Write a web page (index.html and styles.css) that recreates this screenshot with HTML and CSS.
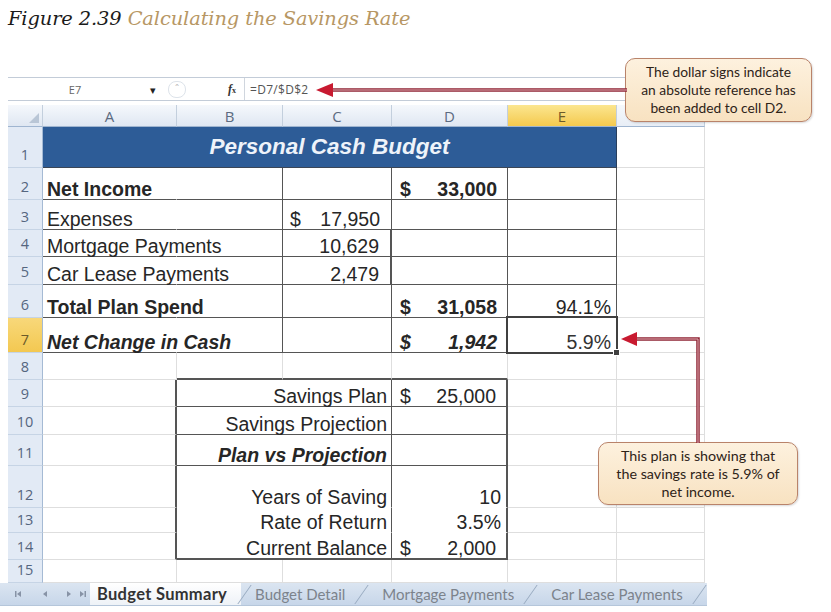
FILE: index.html
```html
<!DOCTYPE html>
<html>
<head>
<meta charset="utf-8">
<link rel="stylesheet" href="styles.css">
</head>
<body>
<div class="page">
  <h1 class="fig-title"><span class="fig-num">Figure 2.39</span> <span class="fig-name">Calculating the Savings Rate</span></h1>

  <div class="sheet">
    <div class="fbar">
      <div class="namebox">E7</div>
      <div class="dd">&#9662;</div>
      <div class="pill"><span>&#710;</span></div>
      <div class="fx"><i>f</i><small>x</small></div>
      <div class="formula">=D7/$D$2</div>
    </div>

    <div class="grid">
      <!-- header -->
      <div class="ch corner"><svg width="10" height="10" viewBox="0 0 10 10"><polygon points="10,0 10,10 0,10" fill="#b9c6d6"/></svg></div>
      <div class="ch">A</div><div class="ch">B</div><div class="ch">C</div><div class="ch">D</div><div class="ch sel">E</div><div class="ch last"></div>

      <!-- row 1 -->
      <div class="rh">1</div>
      <div class="c title span5">Personal Cash Budget</div>
      <div class="c"></div>

      <!-- row 2 -->
      <div class="rh">2</div>
      <div class="c nr bb b">Net Income</div>
      <div class="c br bb"></div>
      <div class="c br bb"></div>
      <div class="c br bb acc b"><span>$</span><span>33,000</span></div>
      <div class="c br bb"></div>
      <div class="c"></div>

      <!-- row 3 -->
      <div class="rh">3</div>
      <div class="c nr bb">Expenses</div>
      <div class="c br bb"></div>
      <div class="c br bb accc"><span>$</span><span>17,950</span></div>
      <div class="c br bb"></div>
      <div class="c br bb"></div>
      <div class="c"></div>

      <!-- row 4 -->
      <div class="rh">4</div>
      <div class="c nr bb">Mortgage Payments</div>
      <div class="c br bb"></div>
      <div class="c br2 bb num-c">10,629</div>
      <div class="c br bb"></div>
      <div class="c br bb"></div>
      <div class="c"></div>

      <!-- row 5 -->
      <div class="rh">5</div>
      <div class="c nr bb">Car Lease Payments</div>
      <div class="c br bb"></div>
      <div class="c br2 bb num-c">2,479</div>
      <div class="c br bb"></div>
      <div class="c br bb"></div>
      <div class="c"></div>

      <!-- row 6 -->
      <div class="rh">6</div>
      <div class="c nr bb b">Total Plan Spend</div>
      <div class="c br bb"></div>
      <div class="c br bb"></div>
      <div class="c br bb acc b"><span>$</span><span>31,058</span></div>
      <div class="c br bb num">94.1%</div>
      <div class="c"></div>

      <!-- row 7 -->
      <div class="rh selr">7</div>
      <div class="c nr bb b i">Net Change in Cash</div>
      <div class="c br bb"></div>
      <div class="c br bb"></div>
      <div class="c br bb acc b i"><span>$</span><span>1,942</span></div>
      <div class="c br bb num cell-active">5.9%</div>
      <div class="c"></div>

      <!-- row 8 -->
      <div class="rh">8</div>
      <div class="c"></div>
      <div class="c bb2"></div>
      <div class="c bb2"></div>
      <div class="c bb2"></div>
      <div class="c"></div>
      <div class="c"></div>

      <!-- row 9 -->
      <div class="rh">9</div>
      <div class="c br2"></div>
      <div class="c span2 br bb lbl">Savings Plan</div>
      <div class="c br2 bb acc"><span>$</span><span>25,000</span></div>
      <div class="c"></div>
      <div class="c"></div>

      <!-- row 10 -->
      <div class="rh">10</div>
      <div class="c br2"></div>
      <div class="c span2 br bb lbl">Savings Projection</div>
      <div class="c br2 bb"></div>
      <div class="c"></div>
      <div class="c"></div>

      <!-- row 11 -->
      <div class="rh">11</div>
      <div class="c br2"></div>
      <div class="c span2 br bb lbl b i">Plan vs Projection</div>
      <div class="c br2 bb"></div>
      <div class="c"></div>
      <div class="c"></div>

      <!-- row 12 -->
      <div class="rh">12</div>
      <div class="c br2"></div>
      <div class="c span2 br nb lbl">Years of Saving</div>
      <div class="c br2 nb num">10</div>
      <div class="c"></div>
      <div class="c"></div>

      <!-- row 13 -->
      <div class="rh">13</div>
      <div class="c br2"></div>
      <div class="c span2 br nb lbl">Rate of Return</div>
      <div class="c br2 nb num">3.5%</div>
      <div class="c"></div>
      <div class="c"></div>

      <!-- row 14 -->
      <div class="rh">14</div>
      <div class="c br2"></div>
      <div class="c span2 br bb2 lbl">Current Balance</div>
      <div class="c br2 bb2 acc"><span>$</span><span>2,000</span></div>
      <div class="c"></div>
      <div class="c"></div>

      <!-- row 15 -->
      <div class="rh">15</div>
      <div class="c"></div><div class="c"></div><div class="c"></div><div class="c"></div><div class="c"></div><div class="c"></div>
    </div>

    <div class="tabs">
      <div class="nav">
        <svg width="80" height="10" viewBox="0 0 80 10">
          <rect x="7" y="2" width="1.5" height="6" fill="#8793a6"/>
          <polygon points="9,5 13,2 13,8" fill="#8793a6"/>
          <polygon points="35,5 39,2 39,8" fill="#8793a6"/>
          <polygon points="59,2 63,5 59,8" fill="#8793a6"/>
          <polygon points="72,2 76,5 72,8" fill="#8793a6"/>
          <rect x="76.5" y="2" width="1.5" height="6" fill="#8793a6"/>
        </svg>
      </div>
      <div class="tab current">Budget Summary</div>
      <div class="tab">Budget Detail</div>
      <div class="tab">Mortgage Payments</div>
      <div class="tab">Car Lease Payments</div>
    </div>
  </div>

  <div class="callout c1">The dollar signs indicate<br>an absolute reference has<br>been added to cell D2.</div>
  <div class="callout c2">This plan is showing that<br>the savings rate is 5.9% of<br>net income.</div>

  <svg class="arrows" width="831" height="612" viewBox="0 0 831 612">
    <line x1="330" y1="90" x2="627" y2="90" stroke="#8f2535" stroke-width="3.5"/>
    <line x1="330" y1="90" x2="627" y2="90" stroke="#e2b2b8" stroke-width="1"/>
    <polygon points="316,90 333,83 333,97" fill="#c81a30"/>
    <path d="M698,443 V339 H634" fill="none" stroke="#8f2535" stroke-width="3.5"/>
    <path d="M698,443 V339 H634" fill="none" stroke="#e2b2b8" stroke-width="1"/>
    <polygon points="621,339 637,332 637,346" fill="#c81a30"/>
  </svg>
</div>
</body>
</html>
```

FILE: styles.css
```css
html, body {
  margin: 0;
  padding: 0;
  background: #ffffff;
}

.page {
  position: relative;
  width: 831px;
  height: 612px;
  padding: 8px;
  box-sizing: border-box;
  overflow: hidden;
}

.fig-title {
  margin: 0;
  height: 22px;
  line-height: 22px;
  font-family: "DejaVu Serif", "Liberation Serif", serif;
  font-style: italic;
  font-weight: normal;
  font-size: 19.4px;
  letter-spacing: -0.1px;
  white-space: nowrap;
}
.fig-num { color: #1a1a1a; }
.fig-name { color: #b79764; }

.sheet {
  margin-top: 47px;
  font-family: "Liberation Sans", Arial, sans-serif;
}

/* formula bar */
.fbar {
  display: flex;
  align-items: center;
  height: 24px;
  width: 797px;
  box-sizing: border-box;
  border-top: 1px solid #c3ccd8;
  border-bottom: 1px solid #c3ccd8;
  background: #fff;
  font-family: "Open Sans", "Liberation Sans", sans-serif;
  font-size: 11px;
  color: #555;
}
.namebox {
  width: 134px;
  text-align: center;
  color: #666;
}
.dd {
  width: 22px;
  text-align: center;
  font-size: 11px;
  color: #222;
}
.pill {
  width: 16px;
  height: 15px;
  margin-left: 4px;
  border: 1px solid #dde3ea;
  border-radius: 8px;
  display: flex;
  justify-content: center;
  align-items: center;
  color: #bbb;
  font-size: 10px;
}
.fx {
  margin-left: 42px;
  width: 16px;
  color: #333;
  font-family: "Liberation Serif", serif;
  font-size: 12px;
  font-weight: bold;
  border-right: 1px solid #d0d6de;
  height: 22px;
  line-height: 22px;
}
.fx small { font-size: 8px; }
.formula {
  margin-left: 5px;
  color: #555;
  font-size: 12px;
  letter-spacing: 0.3px;
}

/* grid */
.grid {
  margin-top: 4px;
  display: grid;
  grid-template-columns: 35px 134px 106px 109px 116px 109px 88px;
  grid-template-rows: 22px 41px 32px 30px 27px 28px 33px 35px 27px 27px 28px 31px 42px 25px 27px 23px;
  font-size: 19.5px;
  line-height: 20px;
  color: #262626;
}
.grid > div {
  box-sizing: border-box;
  border-right: 1px solid #dedede;
  border-bottom: 1px solid #dedede;
  display: flex;
  align-items: flex-end;
  white-space: nowrap;
  padding: 0 4px 0 4px;
}

.grid > .ch {
  background: linear-gradient(#f5f8fc, #dfe7f2);
  border-right-color: #c3cfdd;
  border-bottom-color: #9fb5d0;
  justify-content: center;
  align-items: center;
  padding: 0;
  font-family: "Open Sans", "Liberation Sans", sans-serif;
  font-size: 15px;
  color: #5b6a80;
}
.grid > .ch.corner {
  justify-content: flex-end;
  align-items: flex-end;
  padding: 0 3px 3px 0;
}
.grid > .ch.sel {
  background: linear-gradient(#fbe690, #f4c94e);
  color: #6b5a2a;
}
.grid > .ch.last {
  background: linear-gradient(#f5f8fc, #e8eef6);
}

.grid > .rh {
  background: #e2eaf5;
  border-right-color: #a5bad4;
  border-bottom-color: #c6d4e5;
  justify-content: center;
  font-family: "Open Sans", "Liberation Sans", sans-serif;
  font-size: 14.5px;
  line-height: 18px;
  color: #55667f;
  padding: 0 0 3px 0;
}
.grid > .rh.selr {
  background: linear-gradient(#f8d87a, #f3c851);
  color: #6b5a2a;
}

.grid > .title {
  grid-column: span 5;
  background: #2d5c97;
  border-right-color: #2a3f5c;
  border-bottom-color: #3b4656;
  justify-content: center;
  align-items: center;
  padding: 0;
  color: #eef3fa;
  font-weight: bold;
  font-style: italic;
  font-size: 22.5px;
}
.span2 { grid-column: span 2; }

.b { font-weight: bold; }
.i { font-style: italic; }

.grid > .nr { border-right-color: #ffffff; }
.grid > .br { border-right-color: #555555; }
.grid > .br2 { border-right: 2px solid #555555; }
.grid > .bb { border-bottom-color: #555555; }
.grid > .bb2 { border-bottom: 2px solid #555555; }
.grid > .nb { border-bottom-color: #ffffff; }

.grid > .acc {
  justify-content: space-between;
  padding: 0 10px 0 8px;
}
.grid > .accc {
  justify-content: space-between;
  padding: 0 11px 0 7px;
}
.grid > .num {
  justify-content: flex-end;
  padding-right: 5px;
}
.grid > .num-c {
  justify-content: flex-end;
  padding-right: 11px;
}
.grid > .lbl {
  justify-content: flex-end;
  padding-right: 4px;
}

.cell-active {
  position: relative;
  color: #333;
}
.cell-active::after {
  content: "";
  position: absolute;
  left: -2px;
  top: -2px;
  right: -2px;
  bottom: -2px;
  border: 2px solid #404040;
}
.cell-active::before {
  content: "";
  position: absolute;
  right: -4px;
  bottom: -4px;
  width: 5px;
  height: 5px;
  background: #404040;
  border: 1px solid #fff;
  z-index: 2;
}

/* sheet tabs */
.tabs {
  display: flex;
  align-items: stretch;
  height: 23px;
  width: 707px;
  margin-left: -8px;
  background: linear-gradient(#dbe5f1, #c7d6e9);
  border-bottom: 1px solid #b5c6da;
  box-sizing: border-box;
  font-family: "Lato", "Open Sans", sans-serif;
  font-size: 15px;
  color: #7c838c;
}
.nav {
  width: 90px;
  display: flex;
  align-items: center;
  padding-left: 8px;
  box-sizing: border-box;
}
.tab {
  position: relative;
  display: flex;
  align-items: center;
  padding: 0 23px 0 14px;
}
.tab::after {
  content: "";
  position: absolute;
  right: 6px;
  top: 2px;
  bottom: 1px;
  width: 0;
  border-right: 1px solid #97a9bf;
  transform: skewX(-35deg);
}
.tab.current {
  background: linear-gradient(#ffffff, #eef2f7);
  color: #333;
  font-weight: bold;
  font-size: 16.5px;
  letter-spacing: 0.3px;
  padding: 0 14px 0 7px;
}
.tab.current::after {
  right: -4px;
}

/* callouts */
.callout {
  position: absolute;
  box-sizing: border-box;
  display: flex;
  align-items: center;
  justify-content: center;
  text-align: center;
  background: linear-gradient(#fdf1de, #f8e2c1);
  border: 1.5px solid #b9836a;
  border-radius: 10px;
  font-family: "Lato", "Open Sans", sans-serif;
  font-size: 14px;
  line-height: 18px;
  color: #2e2318;
  box-shadow: 1px 1px 2px rgba(0,0,0,0.15);
}
.c1 {
  left: 625px;
  top: 58px;
  width: 187px;
  height: 64px;
  font-size: 13.8px;
}
.c2 {
  left: 598px;
  top: 442px;
  width: 200px;
  height: 63px;
  font-size: 14.3px;
}

.arrows {
  position: absolute;
  left: 0;
  top: 0;
  pointer-events: none;
}
```
